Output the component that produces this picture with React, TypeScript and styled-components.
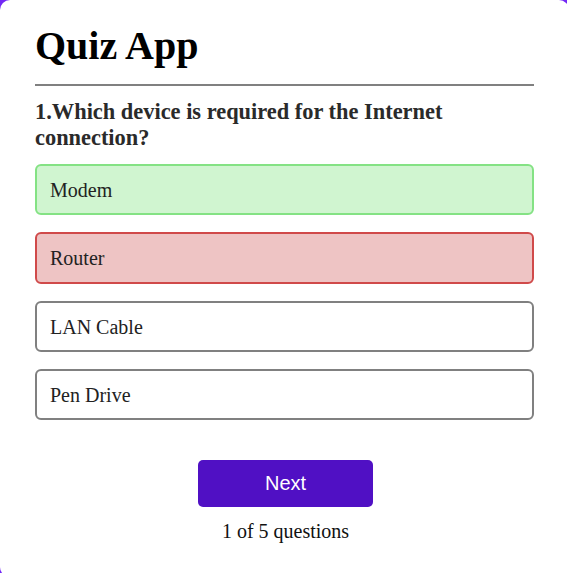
import React from "react";
import styled, { createGlobalStyle } from "styled-components";

const Global = createGlobalStyle`
  html, body {
    margin: 0;
    padding: 0;
    overflow: hidden;
    background: #7328f5;
  }
  body {
    font-family: "Liberation Serif", "Times New Roman", serif;
  }
`;

const Page = styled.div`
  width: 567px;
  height: 573px;
  overflow: hidden;
`;

const Card = styled.div`
  box-sizing: border-box;
  width: 569px;
  height: 577px;
  background: #ffffff;
  border-radius: 10px;
  padding: 24px 35px 0 35px;
  display: flex;
  flex-direction: column;
`;

const Title = styled.h1`
  margin: 0;
  font-size: 40px;
  font-weight: 700;
  color: #000;
  line-height: 44px;
  padding-bottom: 16px;
  border-bottom: 2px solid #808080;
`;

const Question = styled.h2`
  margin: 13px 0 0 0;
  font-size: 22.4px;
  line-height: 26px;
  font-weight: 700;
  color: #2a2a2a;
`;

const Options = styled.div`
  display: flex;
  flex-direction: column;
  gap: 17px;
  margin-top: 13px;
`;

type Variant = "correct" | "wrong" | "neutral";

const palette: Record<Variant, { bg: string; border: string }> = {
  correct: { bg: "#d0f5d0", border: "#84e284" },
  wrong: { bg: "#eec4c4", border: "#d04a4a" },
  neutral: { bg: "#ffffff", border: "#808080" },
};

const Option = styled.button<{ $variant: Variant }>`
  box-sizing: border-box;
  width: 100%;
  height: 51.3px;
  display: flex;
  align-items: center;
  padding: 2px 13px 0 13px;
  text-align: left;
  font-family: "Liberation Serif", "Times New Roman", serif;
  font-size: 20px;
  color: #222;
  background: ${(p) => palette[p.$variant].bg};
  border: 2px solid ${(p) => palette[p.$variant].border};
  border-radius: 6px;
  cursor: pointer;
`;

const Footer = styled.div`
  display: flex;
  flex-direction: column;
  align-items: center;
  margin-top: 40px;
  padding-left: 2px;
`;

const NextButton = styled.button`
  width: 175px;
  height: 47px;
  border: none;
  border-radius: 5px;
  background: #5010c4;
  color: #fff;
  font-family: "Liberation Sans", Arial, sans-serif;
  font-size: 20px;
  cursor: pointer;
`;

const Progress = styled.p`
  margin: 13px 0 0 0;
  font-size: 20px;
  line-height: 22px;
  color: #111;
`;

const options: { text: string; variant: Variant }[] = [
  { text: "Modem", variant: "correct" },
  { text: "Router", variant: "wrong" },
  { text: "LAN Cable", variant: "neutral" },
  { text: "Pen Drive", variant: "neutral" },
];

export default function App() {
  return (
    <Page>
      <Global />
      <Card>
        <Title>Quiz App</Title>
        <Question>1.Which device is required for the Internet connection?</Question>
        <Options>
          {options.map((o) => (
            <Option key={o.text} $variant={o.variant}>
              {o.text}
            </Option>
          ))}
        </Options>
        <Footer>
          <NextButton>Next</NextButton>
          <Progress>1 of 5 questions</Progress>
        </Footer>
      </Card>
    </Page>
  );
}
